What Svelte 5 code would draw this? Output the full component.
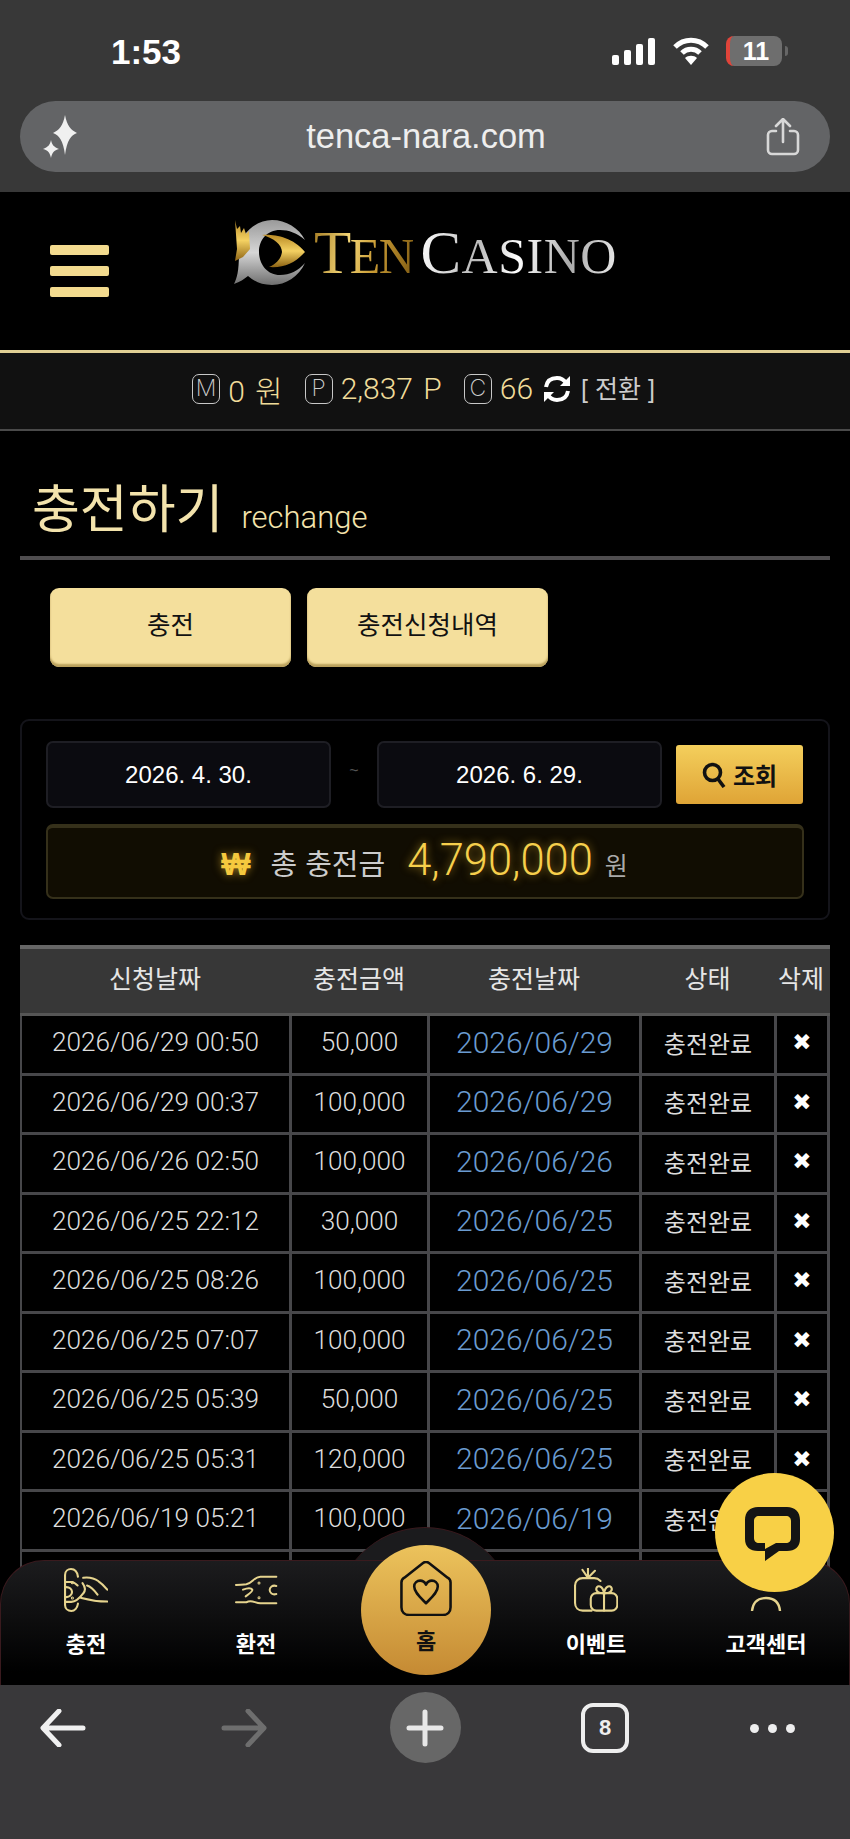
<script>
	const rows = [
		['2026/06/29 00:50', '50,000', '2026/06/29'],
		['2026/06/29 00:37', '100,000', '2026/06/29'],
		['2026/06/26 02:50', '100,000', '2026/06/26'],
		['2026/06/25 22:12', '30,000', '2026/06/25'],
		['2026/06/25 08:26', '100,000', '2026/06/25'],
		['2026/06/25 07:07', '100,000', '2026/06/25'],
		['2026/06/25 05:39', '50,000', '2026/06/25'],
		['2026/06/25 05:31', '120,000', '2026/06/25'],
		['2026/06/19 05:21', '100,000', '2026/06/19'],
		['2026/06/18 03:10', '100,000', '2026/06/18']
	];
</script>

<div class="screen">
	<div class="chrome-top">
		<div class="status">
			<span class="time">1:53</span>
			<div class="status-icons">
				<svg width="44" height="27" viewBox="0 0 44 27" fill="#fff">
					<rect x="0" y="17" width="7" height="10" rx="2" />
					<rect x="12" y="12" width="7" height="15" rx="2" />
					<rect x="24" y="6" width="7" height="21" rx="2" />
					<rect x="36" y="0" width="7" height="27" rx="2" />
				</svg>
				<svg width="38" height="28" viewBox="0 0 38 28" fill="none" stroke="#fff" stroke-width="5">
					<path d="M3 10C12 1 26 1 35 10" />
					<path d="M10 16C15 11 23 11 28 16" />
					<path d="M19 28l-6-7c3-3 9-3 12 0z" fill="#fff" stroke="none" />
				</svg>
				<div class="battery"><span>11</span></div>
				<div class="battery-nub"></div>
			</div>
		</div>
		<div class="url-bar">
			<svg width="44" height="44" viewBox="0 0 44 44" fill="#f0f0f0">
				<path d="M23 0c2 11 6 15 12 18-6 2-10 7-12 22-2-15-6-20-12-22 6-3 10-7 12-18z" />
				<path d="M9 25c1 5 3 7 8 9-5 1-7 4-8 9-1-5-3-8-8-9 5-2 7-4 8-9z" />
			</svg>
			<span class="url">tenca-nara.com</span>
			<svg width="34" height="38" viewBox="0 0 34 38" fill="none" stroke="#d8d8d8" stroke-width="2.6" stroke-linecap="round" stroke-linejoin="round">
				<path d="M10 13H6a4 4 0 0 0-4 4v15a4 4 0 0 0 4 4h22a4 4 0 0 0 4-4V17a4 4 0 0 0-4-4h-4" />
				<path d="M17 24V2M10 8l7-7 7 7" />
			</svg>
		</div>
	</div>

	<header class="site-head">
		<div class="burger"><i></i><i></i><i></i></div>
		<div class="logo">
			<svg width="72" height="65" viewBox="0 0 72 65">
				<defs>
					<linearGradient id="gold" x1="0" y1="0" x2="0" y2="1">
						<stop offset="0" stop-color="#b98a25" />
						<stop offset="0.5" stop-color="#f4d162" />
						<stop offset="1" stop-color="#8e6414" />
					</linearGradient>
					<linearGradient id="silver" x1="0" y1="0" x2="0" y2="1">
						<stop offset="0" stop-color="#9a9a9a" />
						<stop offset="0.5" stop-color="#d6d6d6" />
						<stop offset="1" stop-color="#6f6f6f" />
					</linearGradient>
				</defs>
				<path fill-rule="evenodd" fill="url(#silver)" d="M38 0c14 0 27 8 33 20-8-7-16-10-25-10-13 0-21 10-21 22s8 23 21 23c10 0 18-4 25-12-6 13-19 22-33 22-11 0-18-4-24-9-4 3-8 6-14 8 3-6 5-13 5-32C5 14 22 0 38 0z" />
				<path fill="url(#gold)" d="M28 15c10-1 30 1 43 17-10 11-20 16-36 15 7-3 12-8 13-15 0-7-8-14-20-17z" />
				<path fill="url(#gold)" d="M1 0l2 9 3-3 1 7 3-5 2 6 3-3 1 18-7 8-8 4 2-12z" />
			</svg>
			<span class="wordmark gold-text">T<small>EN</small></span>
			<span class="wordmark silver-text">C<small>ASINO</small></span>
		</div>
	</header>

	<div class="balance">
		<span class="box">M</span><span class="amt">0 원</span>
		<span class="box second">P</span><span class="amt">2,837 P</span>
		<span class="box second">C</span><span class="amt">66</span>
		<svg class="refresh" width="28" height="30" viewBox="0 0 28 30" fill="none" stroke="#fff" stroke-width="4">
			<path d="M3 13C4 7 8 4 14 4c4 0 7 2 9 5" />
			<path d="M25 17c-1 6-5 9-11 9-4 0-7-2-9-5" />
			<path d="M27 2v10H17z" fill="#fff" stroke="none" />
			<path d="M1 28V18h10z" fill="#fff" stroke="none" />
		</svg>
		<span class="swap">[ 전환 ]</span>
	</div>

	<main class="content">
		<div class="title">
			<h1>충전하기</h1>
			<span>rechange</span>
		</div>

		<div class="tabs">
			<button>충전</button>
			<button>충전신청내역</button>
		</div>

		<section class="panel">
			<div class="dates">
				<div class="date">2026. 4. 30.</div>
				<span class="tilde">~</span>
				<div class="date">2026. 6. 29.</div>
				<button class="search">
					<svg width="24" height="26" viewBox="0 0 24 26" fill="none" stroke="#111" stroke-width="3.6">
						<circle cx="10.5" cy="10.5" r="8" />
						<path d="M16 17l6 8" />
					</svg>
					조회
				</button>
			</div>
			<div class="total">
				<span class="won">₩</span>
				<span class="total-label">총 충전금</span>
				<span class="total-value">4,790,000</span>
				<span class="total-unit">원</span>
			</div>
		</section>

		<div class="table">
			<div class="thead">
				<span>신청날짜</span><span>충전금액</span><span>충전날짜</span><span>상태</span><span>삭제</span>
			</div>
			<div class="tbody">
				{#each rows as row}
					<div class="row">
						<span>{row[0]}</span>
						<span>{row[1]}</span>
						<span class="link">{row[2]}</span>
						<span class="state">충전완료</span>
						<span class="del">✖</span>
					</div>
				{/each}
			</div>
		</div>
	</main>

	<nav class="bottom-nav">
		<div class="bump"></div>
		<div class="nav-bar">
			<a>
				<svg width="44" height="44" viewBox="0 0 126 126" fill="none" stroke="#e6d48e" stroke-width="6" stroke-linecap="round">
					<path d="M3 40V20C3 8 12 3 20 3c10 0 18 8 20 22" />
					<path d="M3 40v66c0 10 8 17 18 17 9 0 17-8 19-21" />
					<path d="M3 40h18c8 0 14 6 18 10" />
					<path d="M3 97h18c10 0 22-8 34-24 8-10 4-22-2-30" />
					<path d="M3 55c14-2 20 8 20 14s-6 16-20 14" />
					<path d="M55 28c16-2 30 0 44 10 12 8 20 18 25 24" />
					<path d="M66 50c8 2 18 10 30 26" />
					<path d="M48 85c18 5 38 11 76 11" />
					<circle cx="24" cy="42" r="1.5" />
					<circle cx="24" cy="86" r="1.5" />
				</svg>
				<span>충전</span>
			</a>
			<a>
				<svg class="ex" width="44" height="30" viewBox="0 0 126 90" fill="none" stroke="#e6d48e" stroke-width="6" stroke-linecap="round">
					<path d="M124 5H76C58 5 52 24 34 28 22 30 12 28 3 30" />
					<path d="M124 85H76C60 85 50 72 34 82H3" />
					<path d="M24 44c10-4 24-6 28 0 2 6-12 14-20 20" />
					<path d="M124 33c-12-4-20 4-20 12s8 16 20 12" />
					<circle cx="72" cy="24" r="1.5" />
					<circle cx="72" cy="68" r="1.5" />
				</svg>
				<span>환전</span>
			</a>
			<a class="home">
				<svg width="54" height="55" viewBox="0 0 54 56" fill="none" stroke="#111" stroke-width="2.6" stroke-linejoin="round">
					<path d="M2 22c0-2 1-4 3-5L24 2c2-1.500 4-1.500 6 0l19 15c2 1 3 3 3 5v25c0 5-3 8-8 8H10c-5 0-8-3-8-8z" />
					<path d="M27 43C21 37 15 32 15 26c0-4 3-6 6-6 3 0 5 2 6 4 1-2 3-4 6-4 3 0 6 2 6 6 0 6-6 11-12 17z" />
				</svg>
				<span>홈</span>
			</a>
			<a>
				<svg width="44" height="44" viewBox="0 0 126 126" fill="none" stroke="#e6d48e" stroke-width="6" stroke-linecap="round" stroke-linejoin="round">
					<path d="M76 37c-6-6-12-8-18-8H25C12 29 3 38 3 50v50c0 13 9 22 22 22h26" />
					<path d="M40 28L24 5M40 28V1M40 28L60 8" />
					<rect x="48" y="72" width="76" height="50" rx="16" />
					<path d="M86 72v50M86 72C72 74 62 66 64 58c3-10 18-8 22 14zM86 72c14 2 24-6 22-14-3-10-18-8-22 14z" />
				</svg>
				<span>이벤트</span>
			</a>
			<a>
				<svg width="44" height="44" viewBox="0 0 44 44" fill="none" stroke="#e6d48e" stroke-width="2.400">
					<circle cx="22" cy="11" r="9" />
					<path d="M8 43C9 33 15 30 22 30s13 3 14 13" />
				</svg>
				<span>고객센터</span>
			</a>
		</div>
	</nav>

	<button class="chat" aria-label="chat">
		<svg width="55" height="54" viewBox="0 0 55 54">
			<path fill="#141414" fill-rule="evenodd" d="M13 0H42C50 0 55 5 55 13V32C55 40 50 44 42 44H34L20 54V44H13C5 44 0 40 0 32V13C0 5 5 0 13 0ZM14 9C11 9 9 11 9 14V31C9 34 11 36 14 36H20V42L31 36H41C44 36 46 34 46 31V14C46 11 44 9 41 9Z" />
		</svg>
	</button>

	<div class="chrome-bottom">
		<svg width="46" height="38" viewBox="0 0 46 38" fill="none" stroke="#f0f0f0" stroke-width="5" stroke-linecap="round" stroke-linejoin="round">
			<path d="M43 19H4M19 2L3 19l16 17" />
		</svg>
		<svg width="46" height="38" viewBox="0 0 46 38" fill="none" stroke="#6e6e6e" stroke-width="5" stroke-linecap="round" stroke-linejoin="round">
			<path d="M3 19h39M27 2l16 17-16 17" />
		</svg>
		<div class="plus">
			<svg width="38" height="38" viewBox="0 0 38 38" stroke="#e8e8e8" stroke-width="5" stroke-linecap="round">
				<path d="M19 3v32M3 19h32" />
			</svg>
		</div>
		<div class="tab-count">8</div>
		<div class="dots"><i></i><i></i><i></i></div>
	</div>
</div>

<style>
	:global(body) {
		margin: 0;
		background: #000;
	}

	.screen {
		position: relative;
		width: 850px;
		height: 1839px;
		overflow: hidden;
		background: #000;
		font-family: 'Liberation Sans', 'Noto Sans CJK KR', sans-serif;
		color: #ddd;
	}

	.chrome-top {
		height: 192px;
		box-sizing: border-box;
		background: #383838;
		padding: 32px 20px 0;
	}

	.status {
		display: flex;
		justify-content: space-between;
		align-items: center;
		height: 38px;
		padding: 0 42px 0 91px;
		margin-bottom: 31px;
	}

	.time {
		font-size: 35px;
		font-weight: 700;
		color: #fff;
		transform: translateY(1px);
	}

	.status-icons {
		display: flex;
		align-items: center;
		gap: 16px;
	}

	.battery {
		position: relative;
		width: 56px;
		height: 30px;
		box-sizing: border-box;
		background: #6e6e6e;
		border-left: 4px solid #e0443a;
		border-radius: 8px;
		color: #fff;
		font-size: 25px;
		font-weight: 700;
		line-height: 30px;
		text-align: center;
	}

	.battery-nub {
		width: 3px;
		height: 10px;
		margin-left: -13px;
		background: #666;
		border-radius: 0 3px 3px 0;
	}

	.url-bar {
		display: flex;
		align-items: center;
		justify-content: space-between;
		height: 71px;
		padding: 0 30px 0 22px;
		background: #636466;
		border-radius: 36px;
	}

	.url {
		font-size: 34.5px;
		color: #eee;
	}

	.site-head {
		display: flex;
		height: 158px;
		box-sizing: border-box;
		padding: 34px 0 0 50px;
		background: #000;
	}

	.burger {
		display: flex;
		flex-direction: column;
		gap: 11px;
		margin-top: 19px;
		width: 59px;
	}

	.burger i {
		display: block;
		height: 10px;
		background: #f3db8f;
		border-radius: 2px;
	}

	.logo {
		display: flex;
		align-items: baseline;
		margin: -6px 0 0 125px;
		height: 66px;
	}

	.logo svg {
		align-self: flex-start;
		margin-right: 8px;
	}

	.wordmark {
		font-family: 'Liberation Serif', serif;
		font-size: 61px;
		line-height: 66px;
		background-clip: text;
		-webkit-background-clip: text;
		color: transparent;
	}

	.wordmark small {
		font-size: 50px;
	}

	.gold-text {
		background-image: linear-gradient(100deg, #a47b22, #f4d677 35%, #c99b34 60%, #7e5a12);
		letter-spacing: -1.5px;
		margin-right: 7px;
	}

	.silver-text {
		background-image: linear-gradient(100deg, #fff, #bbb 30%, #fff 50%, #aaa 75%, #eee);
		letter-spacing: 0.5px;
	}

	.balance {
		display: flex;
		align-items: center;
		justify-content: center;
		height: 81px;
		box-sizing: border-box;
		padding: 0 3px 5px 0;
		background: #111;
		border-top: 3px solid #e0cf94;
		border-bottom: 2px solid #4a4a4a;
	}

	.box {
		width: 28px;
		height: 30px;
		box-sizing: border-box;
		border: 1.500px solid #c8c8c8;
		border-radius: 7px;
		color: #ccc;
		font-family: Inter, 'Liberation Sans', sans-serif;
		font-size: 23px;
		font-weight: 200;
		line-height: 27px;
		text-align: center;
		margin-right: 8px;
	}

	.box.second {
		margin-left: 22px;
	}

	.amt {
		font-size: 30px;
		font-family: Roboto, 'Noto Sans CJK KR', sans-serif;
		font-weight: 300;
		color: #f0dc9a;
		word-spacing: 3px;
	}

	.refresh {
		margin: 0 10px;
	}

	.swap {
		font-size: 25px;
		color: #ccc;
		margin-bottom: 4px;
	}

	.content {
		padding: 0 20px;
	}

	.title {
		display: flex;
		align-items: baseline;
		gap: 18px;
		height: 125px;
		box-sizing: border-box;
		padding: 42px 0 0 12px;
		color: #f3e3ac;
	}

	h1 {
		margin: 0;
		font-size: 52px;
		font-weight: 400;
		line-height: 74px;
	}

	.title span {
		font-family: Roboto, sans-serif;
		font-weight: 300;
		font-size: 31px;
	}

	.tabs {
		display: flex;
		gap: 16px;
		padding: 28px 0 0 30px;
		border-top: 4px solid #4f4d4f;
	}

	.tabs button {
		width: 241px;
		height: 79px;
		border: 0;
		border-radius: 9px;
		background: #f4df9c;
		box-shadow: inset 0 -3px 2px #b9a05c;
		color: #111;
		font-family: inherit;
		font-size: 25.5px;
		padding: 0 0 10px;
	}

	.panel {
		margin-top: 52px;
		height: 201px;
		box-sizing: border-box;
		padding: 20px 24px 0;
		border: 2px solid #14141a;
		border-radius: 9px;
	}

	.dates {
		display: flex;
		align-items: center;
	}

	.date {
		width: 285px;
		height: 67px;
		box-sizing: border-box;
		background: #0b0b10;
		border: 2px solid #1e1e24;
		border-radius: 7px;
		color: #fff;
		font-size: 24px;
		line-height: 63px;
		text-align: center;
	}

	.tilde {
		width: 46px;
		text-align: center;
		font-size: 16px;
		color: #555;
		margin-top: -8px;
	}

	.search {
		display: flex;
		align-items: center;
		justify-content: center;
		gap: 7px;
		width: 127px;
		height: 59px;
		margin-left: 14px;
		border: 0;
		border-radius: 3px;
		padding: 0;
		background: linear-gradient(#f4cf5c, #dfa436);
		color: #111;
		font-family: inherit;
		font-size: 24px;
		font-weight: 700;
	}

	.total {
		display: flex;
		align-items: baseline;
		justify-content: center;
		height: 75px;
		box-sizing: border-box;
		width: 758px;
		margin-top: 16px;
		padding-top: 7px;
		padding-right: 1px;
		background: #110d02;
		border: 2px solid #35301a;
		border-top-width: 4px;
		border-radius: 7px;
	}

	.won {
		font-size: 31px;
		font-weight: 700;
		color: #f5c93e;
		text-shadow: 0 0 8px rgba(245, 190, 50, 0.6);
		margin-right: 20px;
	}

	.total-label {
		font-size: 29px;
		color: #ccc;
		margin-right: 22px;
	}

	.total-value {
		font-family: Roboto, sans-serif;
		font-weight: 300;
		font-size: 43.5px;
		color: #f6cf4c;
		text-shadow: 0 0 8px rgba(245, 190, 50, 0.6);
		margin-right: 12px;
	}

	.total-unit {
		font-size: 25px;
		color: #aaa;
	}

	.table {
		margin-top: 25px;
		width: 810px;
	}

	.thead,
	.row {
		display: grid;
		grid-template-columns: 272px 138px 212px 135px 53px;
		align-items: center;
		text-align: center;
	}

	.thead {
		height: 68px;
		box-sizing: border-box;
		border-top: 4px solid #666;
		background: #373737;
		color: #e6e6e6;
		font-size: 25px;
		padding-bottom: 8px;
		grid-template-columns: 270px 138px 212px 135px 55px;
	}

	.thead span:last-child {
		margin-left: -3px;
	}

	.tbody {
		border-top: 3px solid #555;
	}

	.row {
		height: 59.5px;
		box-sizing: border-box;
		font-family: Roboto, 'Noto Sans CJK KR', sans-serif;
		font-weight: 300;
		font-size: 26.2px;
		color: #ddd;
	}

	.row span {
		display: flex;
		align-items: center;
		justify-content: center;
		height: 100%;
		box-sizing: border-box;
		padding-bottom: 4px;
		border-right: 3.500px solid #47474a;
		border-bottom: 3.500px solid #47474a;
	}

	.row span:first-child {
		border-left: 2.500px solid #47474a;
	}

	.row .link {
		color: #6a9bd0;
		font-size: 30px;
	}

	.row .state {
		font-size: 24px;
		font-family: 'Liberation Sans', 'Noto Sans CJK KR', sans-serif;
		font-weight: 400;
	}

	.row .del {
		font-family: 'DejaVu Sans', sans-serif;
		font-weight: 400;
		font-size: 23px;
		color: #fff;
	}

	/* overlays: fixed nav, chat bubble and browser toolbar */
	.bottom-nav {
		position: absolute;
		left: 0;
		right: 0;
		top: 1560px;
		height: 125px;
	}

	.bump {
		position: absolute;
		left: 335px;
		top: -33px;
		width: 180px;
		height: 120px;
		border-radius: 90px 90px 0 0;
		background: #1b1b1d;
		border-top: 1px solid #3a1a1e;
		box-sizing: border-box;
	}

	.nav-bar {
		position: relative;
		display: grid;
		grid-template-columns: 170px 170px 170px 170px 170px;
		height: 125px;
		box-sizing: border-box;
		border: 1px solid #3a1a1e;
		border-bottom: 0;
		border-radius: 44px 44px 0 0;
		background: linear-gradient(#1c1c1e, #000 90%);
	}

	.nav-bar a {
		display: flex;
		flex-direction: column;
		align-items: center;
		height: 100%;
		box-sizing: border-box;
		padding-top: 7px;
		color: #fff;
		font-size: 22px;
		font-weight: 700;
	}

	.nav-bar svg.ex {
		margin: 7px 0 7px;
	}

	.nav-bar a span {
		margin-top: 14px;
	}

	.nav-bar a.home {
		position: absolute;
		left: 360px;
		top: -16px;
		width: 130px;
		height: 130px;
		border-radius: 50%;
		background: linear-gradient(#ecc35c, #c58a33);
		color: #111;
		padding-top: 16px;
	}

	.nav-bar a.home span {
		margin-top: 7px;
	}

	.nav-bar a:nth-child(4) {
		grid-column: 4;
	}

	.chat {
		position: absolute;
		left: 715px;
		top: 1473px;
		display: flex;
		align-items: center;
		justify-content: center;
		width: 119px;
		height: 119px;
		padding: 3px 5px 0 0;
		border: 0;
		border-radius: 50%;
		background: #f8d046;
	}

	.chrome-bottom {
		position: absolute;
		left: 0;
		right: 0;
		top: 1685px;
		height: 154px;
		box-sizing: border-box;
		padding-top: 7px;
		display: grid;
		grid-template-columns: 126px 236px 126px 234px 100px;
		justify-items: center;
		align-items: start;
		background: #39383a;
	}

	.chrome-bottom > svg {
		margin-top: 17px;
	}

	.plus {
		display: flex;
		align-items: center;
		justify-content: center;
		width: 71px;
		height: 71px;
		border-radius: 50%;
		background: #676767;
	}

	.tab-count {
		width: 48px;
		height: 50px;
		box-sizing: border-box;
		margin-top: 11px;
		border: 4px solid #eee;
		border-radius: 12px;
		color: #eee;
		font-size: 22px;
		font-weight: 700;
		line-height: 42px;
		text-align: center;
	}

	.dots {
		display: flex;
		gap: 9px;
		margin-top: 32px;
	}

	.dots i {
		width: 9px;
		height: 9px;
		background: #eee;
		border-radius: 50%;
	}
</style>
